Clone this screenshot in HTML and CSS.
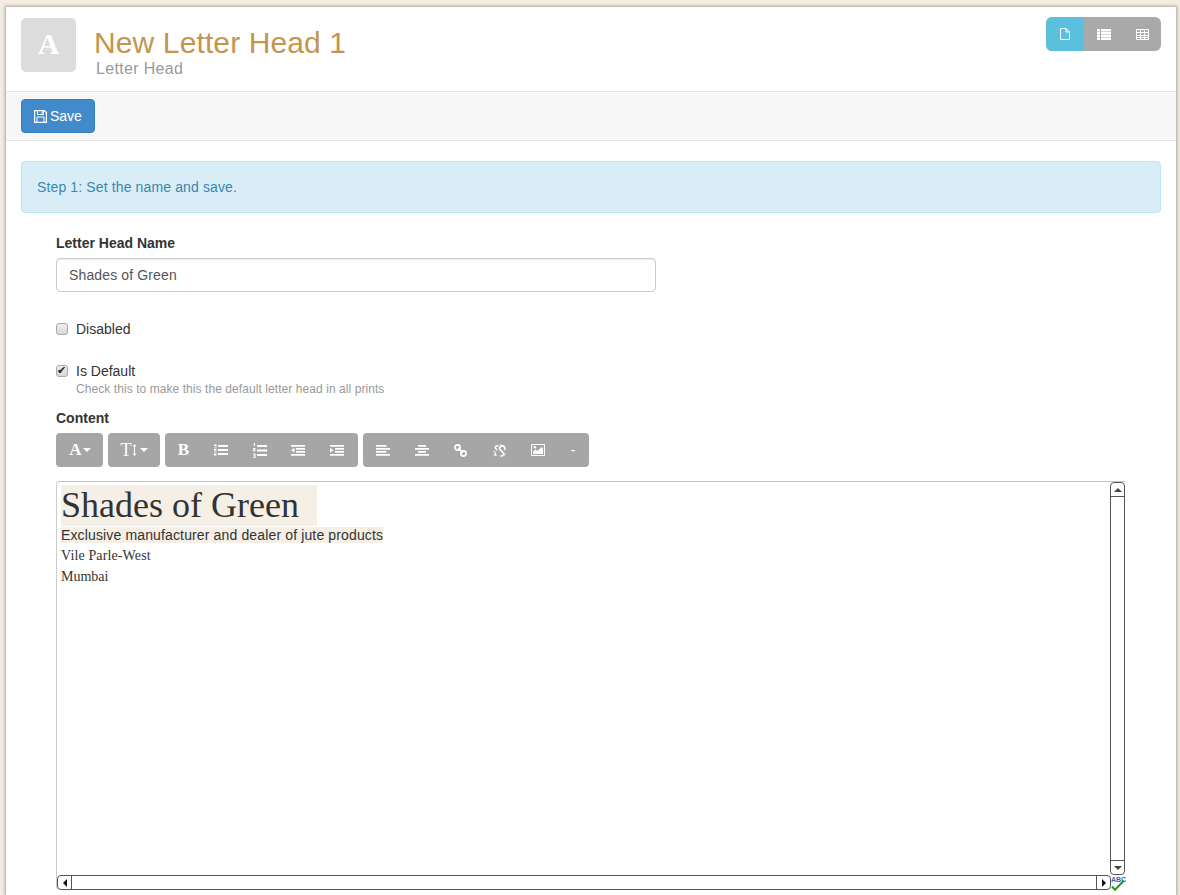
FILE: index.html
```html
<!DOCTYPE html>
<html lang="en">
<head>
<meta charset="utf-8">
<title>New Letter Head 1</title>
<link rel="stylesheet" href="styles.css">
</head>
<body>
<svg class="defs" width="0" height="0" aria-hidden="true">
  <symbol id="i-file" viewBox="0 0 10 12"><path d="M.5 .5h5.500l3.500 3.500v7.500h-9z M6 .5v3.500h3.500" fill="none" stroke="currentColor"/></symbol>
  <symbol id="i-thlist" viewBox="0 0 14 11"><path d="M0 0h3v2.500h-3zM4 0h10v2.500h-10zM0 3h3v2.500h-3zM4 3h10v2.500h-10zM0 6h3v2.500h-3zM4 6h10v2.500h-10zM0 9h3v2h-3zM4 9h10v2h-10z" fill="currentColor"/></symbol>
  <symbol id="i-table" viewBox="0 0 13 11"><path d="M.5 .5h12v10h-12zM.5 3.500h12M.5 6.500h12M.5 8.500h12M4.500 .5v10M8.500 .5v10" fill="none" stroke="currentColor"/></symbol>
  <symbol id="i-save" viewBox="0 0 13 13"><path d="M.6 .6h9.800l2 2v9.800h-11.800z" fill="none" stroke="currentColor" stroke-width="1.200"/><path d="M3.500 1v3.500h6v-3.500M3 12v-5h7v5" fill="none" stroke="currentColor"/><path d="M7.500 1.500h1.300v2h-1.300z" fill="currentColor"/></symbol>
  <symbol id="i-ul" viewBox="0 0 14 12"><path d="M0 .5h2.500v1.500h-2.500zM0 2.700h2.500v.8h-2.500zM0 4.700h2.500v2h-2.500zM0 7.700h2.500v.8h-2.500zM0 9.500h2.500v2h-2.500z" fill="currentColor"/><path d="M4 1h10v2h-10zM4 5h10v2h-10zM4 9h10v2h-10z" fill="currentColor"/></symbol>
  <symbol id="i-ol" viewBox="0 0 14 15"><path d="M.8 0h1.200v3h-1.200zM0 5h2.500v1.300l-1.300 1h1.300v.9h-2.500v-1.300l1.300-1h-1.300zM0 10.500h2.500v4.500h-2.500v-.8h1.300v-1h-.8v-.8h.8v-1h-1.300z" fill="currentColor"/><path d="M4 2h10v2h-10zM4 6.500h10v2h-10zM4 11h10v2h-10z" fill="currentColor"/></symbol>
  <symbol id="i-outdent" viewBox="0 0 14 12"><path d="M0 1h14v1.700h-14zM5 4h9v1.700h-9zM5 7h9v1.700h-9zM0 10h14v1.700h-14zM3.500 3.800v4.800l-3.500-2.400z" fill="currentColor"/></symbol>
  <symbol id="i-indent" viewBox="0 0 14 12"><path d="M0 1h14v1.700h-14zM5 4h9v1.700h-9zM5 7h9v1.700h-9zM0 10h14v1.700h-14zM0 3.800v4.800l3.500-2.400z" fill="currentColor"/></symbol>
  <symbol id="i-left" viewBox="0 0 14 12"><path d="M0 1h10.500v1.700h-10.500zM0 4h14v1.700h-14zM0 7h10.500v1.700h-10.500zM0 10h14v1.700h-14z" fill="currentColor"/></symbol>
  <symbol id="i-center" viewBox="0 0 14 12"><path d="M3 1h8v1.700h-8zM0 4h14v1.700h-14zM3 7h8v1.700h-8zM0 10h14v1.700h-14z" fill="currentColor"/></symbol>
  <symbol id="i-link" viewBox="0 0 14 14"><circle cx="3.800" cy="3.800" r="2.800" fill="none" stroke="currentColor" stroke-width="1.800"/><circle cx="10.200" cy="10.200" r="2.800" fill="none" stroke="currentColor" stroke-width="1.800"/><path d="M4.500 4.500l5 5" stroke="currentColor" stroke-width="2"/></symbol>
  <symbol id="i-unlink" viewBox="0 0 14 14"><path d="M6 1.800h-1.500a2 2 0 0 0-1.400 3.400l1.500 1.500M8 12.800h1.500a2 2 0 0 0 1.400-3.400l-3.300-3.300a2 2 0 0 1 .3-3l.6-.6a2 2 0 0 1 2.800 0l1 1a2 2 0 0 1 0 2.800M3 9.200a2 2 0 0 0-.3 2.700l1 1" fill="none" stroke="currentColor" stroke-width="1.700"/><path d="M0 8h2.500M.5 13l1.500-1.500M8 .2v2M12.500 1l-1.500 1.500M11.500 12l1.500 1M12 10.500h2" stroke="currentColor" stroke-width=".8"/></symbol>
  <symbol id="i-picture" viewBox="0 0 14 12"><path d="M.5 .5h13v11h-13z" fill="none" stroke="currentColor"/><path d="M2 10v-2.500l2.500-2 2 1.500 4-4 1.500 1.500v5.500z" fill="currentColor"/><circle cx="3.800" cy="3.300" r="1.300" fill="currentColor"/></symbol>
</svg>
<div class="window">
  <header class="head">
    <div class="avatar">A</div>
    <div class="titles">
      <h1 class="title">New Letter Head 1</h1>
      <div class="subtitle">Letter Head</div>
    </div>
    <div class="views">
      <span class="view active"><svg class="ic-file"><use href="#i-file"/></svg></span>
      <span class="view view-mid"><svg class="ic-thlist"><use href="#i-thlist"/></svg></span>
      <span class="view"><svg class="ic-table"><use href="#i-table"/></svg></span>
    </div>
  </header>
  <div class="actions">
    <button class="save" type="button"><svg class="ic-save"><use href="#i-save"/></svg>Save</button>
  </div>
  <main class="body">
    <div class="alert">Step 1: Set the name and save.</div>
    <form class="form">
      <label class="label" for="name">Letter Head Name</label>
      <input class="text-input" id="name" type="text" value="Shades of Green">
      <label class="check check-disabled"><input type="checkbox" class="box"><span>Disabled</span></label>
      <label class="check check-default"><input type="checkbox" class="box" checked><span>Is Default</span></label>
      <p class="help">Check this to make this the default letter head in all prints</p>
      <div class="label label-content">Content</div>
      <div class="tools">
        <div class="tool-group">
          <span class="tool tool-font"><b class="serif">A</b><i class="caret"></i></span>
        </div>
        <div class="tool-group">
          <span class="tool tool-size"><span class="serif-t">T</span><svg class="updown" viewBox="0 0 5 12"><path d="M2.500 0l2 2.500h-1.500v7h1.500l-2 2.500-2-2.500h1.500v-7h-1.500z" fill="currentColor"/></svg><i class="caret"></i></span>
        </div>
        <div class="tool-group group-format">
          <span class="tool tool-bold"><b class="serif">B</b></span>
          <span class="tool"><svg class="ic"><use href="#i-ul"/></svg></span>
          <span class="tool"><svg class="ic ic-ol"><use href="#i-ol"/></svg></span>
          <span class="tool"><svg class="ic"><use href="#i-outdent"/></svg></span>
          <span class="tool"><svg class="ic"><use href="#i-indent"/></svg></span>
        </div>
        <div class="tool-group group-insert">
          <span class="tool"><svg class="ic"><use href="#i-left"/></svg></span>
          <span class="tool"><svg class="ic"><use href="#i-center"/></svg></span>
          <span class="tool"><svg class="ic ic-link"><use href="#i-link"/></svg></span>
          <span class="tool"><svg class="ic ic-link"><use href="#i-unlink"/></svg></span>
          <span class="tool"><svg class="ic"><use href="#i-picture"/></svg></span>
          <span class="tool tool-dash">-</span>
        </div>
      </div>
      <div class="editor">
        <div class="doc">
          <div class="doc-title">Shades of Green</div>
          <div class="doc-sub"><span>Exclusive manufacturer and dealer of jute products</span></div>
          <div class="doc-line doc-line-wide">Vile Parle-West</div>
          <div class="doc-line">Mumbai</div>
        </div>
        <div class="vbar">
          <span class="sb-btn sb-up"><i class="tri tri-up"></i></span>
          <span class="sb-track"></span>
          <span class="sb-btn sb-down"><i class="tri tri-down"></i></span>
        </div>
        <div class="hbar">
          <span class="sb-btn sb-left"><i class="tri tri-left"></i></span>
          <span class="sb-track"></span>
          <span class="sb-btn sb-right"><i class="tri tri-right"></i></span>
        </div>
        <div class="spell"><span class="abc">ABC</span><svg class="tick" viewBox="0 0 15 12"><path d="M2 7.500l3 3.300 9-9.300" fill="none" stroke="#1f9a1a" stroke-width="2"/></svg></div>
      </div>
    </form>
  </main>
</div>
</body>
</html>
```

FILE: styles.css
```css
* { box-sizing: border-box; }
html, body { margin: 0; height: 895px; overflow: hidden; }
body {
  background: #f3ede3;
  font-family: "Liberation Sans", Arial, sans-serif;
  font-size: 14px;
  line-height: 20px;
  color: #333;
}
.defs { position: absolute; }
.window {
  margin: 7px 4px 0 6px;
  height: 888px;
  background: #fff;
  box-shadow: 0 0 3px 1px #a8a296;
}
.head {
  display: flex;
  height: 85px;
  padding: 11px 15px 0;
  border-bottom: 1px solid #e4e4e4;
}
.avatar {
  width: 55px;
  height: 54px;
  border-radius: 5px;
  background: #dcdcdc;
  color: #fff;
  font: bold 30px/52px "Liberation Serif", serif;
  text-align: center;
}
.titles { flex: 1; padding: 7px 0 0 18px; }
.title {
  margin: 0;
  font-size: 30px;
  font-weight: normal;
  line-height: 36px;
  letter-spacing: .12px;
  color: #c4954e;
}
.subtitle { margin: -2px 0 0 2px; font-size: 16px; line-height: 20px; letter-spacing: .33px; color: #999; }
.views { display: flex; width: 115px; height: 34px; margin-top: -1px; border-radius: 6px; overflow: hidden; background: #a9a9a9; color: #fff; }
.view { display: flex; width: 38px; align-items: center; justify-content: center; }
.view-mid { width: 39px; }
.view.active { background: #5bc0de; }
.ic-file { width: 10px; height: 12px; }
.ic-thlist { width: 14px; height: 11px; }
.ic-table { width: 13px; height: 11px; }
.actions {
  height: 49px;
  padding: 7px 15px;
  background: #f7f7f7;
  border-bottom: 1px solid #e4e4e4;
}
.save {
  display: flex;
  align-items: center;
  gap: 3px;
  width: 74px;
  height: 34px;
  padding: 0 12px;
  border: 1px solid #357ebd;
  border-radius: 4px;
  background: #428bca;
  color: #fff;
  font: 14px/20px "Liberation Sans", Arial, sans-serif;
}
.ic-save { width: 13px; height: 13px; flex: none; }
.body { padding: 20px 15px 0; }
.alert {
  height: 52px;
  padding: 15px;
  background: #d9edf7;
  border: 1px solid #bce8f1;
  border-radius: 4px;
  letter-spacing: .13px;
  color: #3a87ad;
}
.form { padding: 20px 20px 0 35px; }
.label { display: block; font-weight: bold; color: #333; }
.text-input {
  display: block;
  width: 600px;
  height: 34px;
  margin-top: 5px;
  padding: 6px 12px;
  border: 1px solid #ccc;
  border-radius: 4px;
  color: #555;
  font: 14px/20px "Liberation Sans", Arial, sans-serif;
  letter-spacing: .13px;
  box-shadow: inset 0 1px 1px rgba(0, 0, 0, .075);
}
.check { display: flex; align-items: center; gap: 8px; height: 20px; }
.check-disabled { margin-top: 27px; }
.check-default { margin-top: 22px; }
.box {
  appearance: none;
  position: relative;
  width: 12px;
  height: 12px;
  margin: 0;
  border: 1px solid #a9a9a9;
  border-radius: 3px;
  background: linear-gradient(#ededed, #d8d8d8);
}
.box:checked::before {
  content: "\2714";
  position: absolute;
  left: 0;
  top: -4px;
  font: 11px/18px "DejaVu Sans", sans-serif;
  color: #222;
}
.help { margin: 0 0 0 20px; font-size: 12px; line-height: 16px; letter-spacing: .07px; color: #999; }
.label-content { margin-top: 11px; }
.tools { display: flex; gap: 5px; margin-top: 5px; }
.tool-group { display: flex; height: 34px; border-radius: 4px; background: #a6a6a6; color: #fff; }
.group-format { padding-right: 2px; }
.group-insert { padding-left: 1px; }
.tool { display: flex; width: 38.600px; align-items: center; justify-content: center; }
.tool-font { width: 47px; padding-left: 1px; }
.tool-size { width: 52px; }
.tool-bold { width: 36.700px; }
.tool-dash { width: 32px; font-size: 14px; }
.serif { font: bold 17px/20px "Liberation Serif", serif; }
.serif-t { font: 18px/20px "Liberation Serif", serif; }
.updown { width: 5px; height: 12px; margin-left: 0; }
.caret {
  width: 0;
  height: 0;
  margin-left: 1px;
  border-top: 4px solid #fff;
  border-left: 4px solid transparent;
  border-right: 4px solid transparent;
}
.tool-size .caret { margin-left: 3px; }
.ic { width: 14px; height: 12px; }
.ic-ol { height: 15px; }
.ic-link { width: 13px; height: 13px; }
.editor {
  display: grid;
  grid-template-columns: 1fr 15px;
  grid-template-rows: 393px 15px;
  width: 1069px;
  margin-top: 14px;
  border-top: 1px solid #c4c4c4;
  border-left: 1px solid #ccc;
  border-radius: 4px 0 0 4px;
}
.doc { padding: 3px 4px 0; min-width: 0; font: 14px/21px "Liberation Serif", serif; color: #333; }
.doc-title { width: 256px; height: 41px; background: #f5efe6; font-size: 36px; line-height: 41px; color: #333; }
.doc-sub { margin-top: 1px; line-height: 16px; font-family: "Liberation Sans", Arial, sans-serif; letter-spacing: .14px; }
.doc-sub span { display: inline-block; background: #f5efe6; color: #333; }
.doc-sub + .doc-line { margin-top: 2px; }
.doc-line-wide { letter-spacing: .13px; }
.vbar { display: flex; flex-direction: column; border: 1px solid #555; border-radius: 4px; }
.hbar { display: flex; border: 1px solid #555; border-radius: 4px; margin-right: -1px; }
.sb-track { flex: 1; }
.sb-btn { display: flex; flex: none; width: 13px; height: 14px; align-items: center; justify-content: center; }
.hbar .sb-btn { width: 14px; height: 13px; }
.sb-up { border-bottom: 1px solid #555; }
.sb-down { border-top: 1px solid #555; }
.sb-left { border-right: 1px solid #555; }
.sb-right { border-left: 1px solid #555; }
.tri { width: 0; height: 0; border: 4px solid transparent; }
.tri-up { border-bottom-color: #444; border-top-width: 0; }
.tri-down { border-top-color: #444; border-bottom-width: 0; }
.tri-left { border-right-color: #111; border-left-width: 0; }
.tri-right { border-left-color: #111; border-right-width: 0; }
.spell { position: relative; height: 16px; }
.abc { display: block; margin: 1px 0 0 1px; font-size: 7px; line-height: 7px; color: #1a6fc0; font-weight: bold; }
.tick { position: absolute; left: 0; top: 4px; width: 15px; height: 12px; }
```
